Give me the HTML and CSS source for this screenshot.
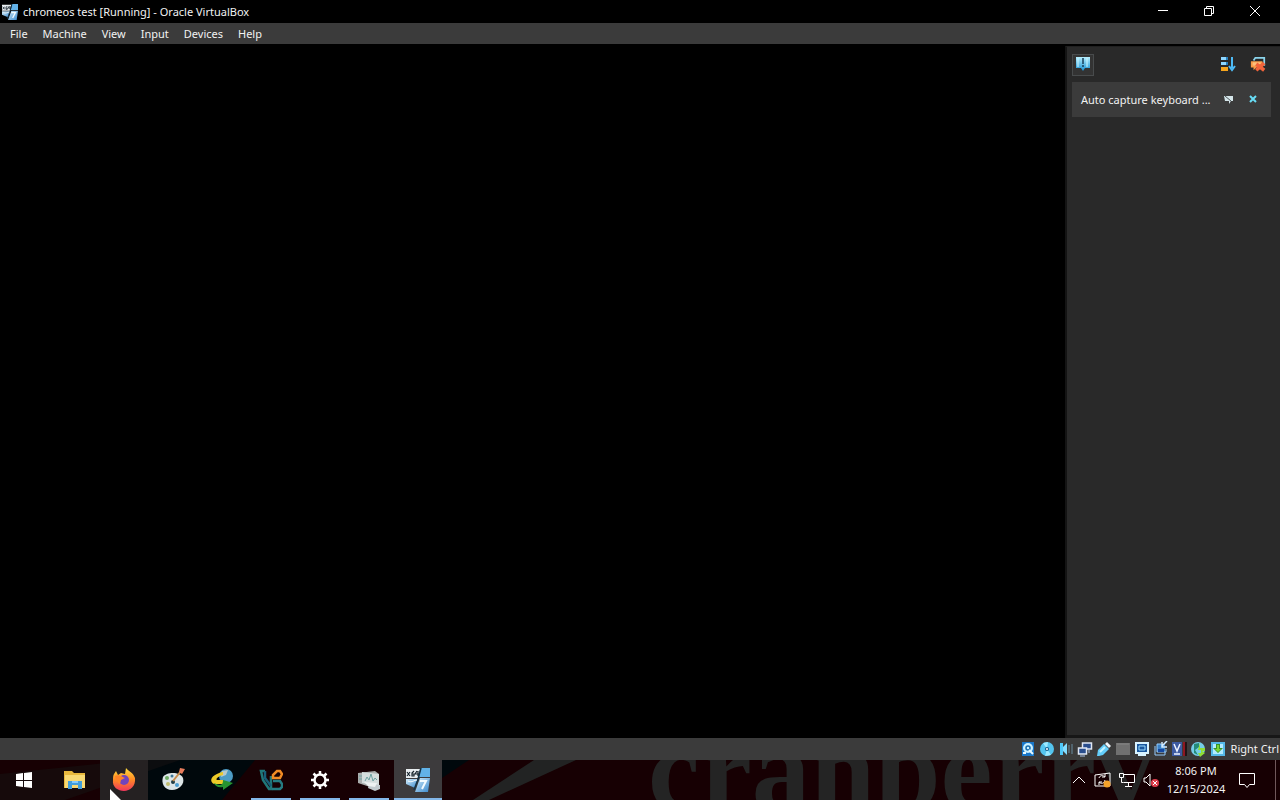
FILE: index.html
```html
<!DOCTYPE html>
<html lang="en">
<head>
<meta charset="utf-8">
<meta name="viewport" content="width=device-width, initial-scale=1">
<title>chromeos test [Running] - Oracle VirtualBox</title>
<link rel="stylesheet" href="styles.css">
</head>
<body>
<svg class="defs" aria-hidden="true">
  <defs>
    <linearGradient id="blue" x2="0" y2="1"><stop stop-color="#b5efff"/><stop offset="1" stop-color="#168fd2"/></linearGradient>
    <linearGradient id="fire" x2="0" y2="1"><stop stop-color="#ffde3b"/><stop offset=".5" stop-color="#ff8a25"/><stop offset="1" stop-color="#f0365c"/></linearGradient>
    <linearGradient id="glass" x2="1" y2="1"><stop stop-color="#d3edfb"/><stop offset="1" stop-color="#3787cc"/></linearGradient>
    <symbol id="vm" viewBox="0 0 24 24">
      <path d="M0 1h14l-2 9H0z" fill="#e8edf0"/><path d="M15 0h9v9H13z" fill="#62b2e8"/>
      <path d="M0 11h12l-3 9-9-4z" fill="url(#glass)"/><path d="M14 10h10l-2 14H9z" fill="url(#glass)"/>
      <path d="M15 0l-3 11-4 11" fill="none" stroke="#123247" stroke-width="1.5"/>
      <path d="M1 4l3 4M4 4L1 8M8 3L6 5v3h2V6H6M11 3L9 6h4M12 3v5" fill="none" stroke="#17242d" stroke-width="1.2"/>
      <path d="M14 13h6l-4 8" fill="none" stroke="#f2fbff" stroke-width="2"/>
      <path d="M2 13c4 2 6-1 9-1" stroke="#fff" fill="none"/>
    </symbol>
  </defs>
</svg>
<div class="desktop">
  <header class="titlebar">
    <svg class="app-icon" viewBox="0 0 24 24" aria-hidden="true"><use href="#vm"/></svg>
    <h1 class="title">chromeos test [Running] - Oracle VirtualBox</h1>
    <div class="window-controls">
      <button class="window-button" aria-label="Minimize"><svg width="12" height="12" viewBox="0 0 12 12"><path d="M1 5.5h10"/></svg></button>
      <button class="window-button" aria-label="Restore"><svg width="12" height="12" viewBox="0 0 12 12"><path d="M1.500 3.500h7v7h-7zM3.500 3V1.500h7v7H9"/></svg></button>
      <button class="window-button" aria-label="Close"><svg width="12" height="12" viewBox="0 0 12 12"><path d="M1 1l10 10M11 1L1 11"/></svg></button>
    </div>
  </header>
  <nav class="menubar" aria-label="Main menu">
    <button>File</button><button>Machine</button><button>View</button><button>Input</button><button>Devices</button><button>Help</button>
  </nav>
  <main class="workspace">
    <section class="guest" aria-label="Guest display"></section>
    <aside class="notifications" aria-label="Notifications">
      <div class="tools">
        <button class="tool tool-active" aria-label="Notifications"><svg width="16" height="16" viewBox="0 0 16 16"><path d="M1 1h14v11h-5l-2 3-2-3H1z" fill="url(#blue)"/><path d="M8 2v6M8 9v2" stroke="#173e5a" stroke-width="1.5"/><path d="M3 2v9M12 2v9" stroke="#caf5ff"/></svg></button>
        <button class="tool" aria-label="Sort notifications"><svg width="16" height="16" viewBox="0 0 16 16"><path d="M1 1h7v3H1zM1 6h7v3H1z" fill="#8ed6ff"/><path d="M1 11h7v4H1z" fill="#f7a51c"/><path d="M6 1h2v3H6zM6 6h2v3H6z" fill="#287ebb"/><path d="M12 1v11M9 10l3 4 3-4" fill="none" stroke="#4dbaf5" stroke-width="2"/></svg></button>
        <button class="tool" aria-label="Delete all notifications"><svg width="16" height="16" viewBox="0 0 18 18"><path d="M4 5l2-3h10v9" fill="none" stroke="#8bd4eb" stroke-width="2"/><path d="M1 6h13v7H7l-3 3v-3H1z" fill="#f99a46"/><path d="M3 8h9M3 10h7" stroke="#ffe0a7"/><path d="M7 9l9 7M16 8l-9 8" stroke="#f2633a" stroke-width="4"/></svg></button>
      </div>
      <article class="notice">
        <span class="notice-text">Auto capture keyboard ...</span>
        <button class="notice-action" aria-label="Do not show again"><svg width="10" height="10" viewBox="0 0 10 10"><path d="M0 1h9v5H7L5 9V6H1z" fill="#d4e5e9"/><path d="M1 1l6 5" stroke="#4c5558"/></svg></button>
        <button class="notice-action" aria-label="Dismiss"><svg width="10" height="10" viewBox="0 0 10 10"><path d="M2 1l6 6M8 1L2 7" stroke="#68dcf5" stroke-width="2"/></svg></button>
      </article>
    </aside>
  </main>
  <footer class="statusbar">
    <div class="devices">
      <svg viewBox="0 0 16 16"><path d="M2 1h12v14H2z" fill="#1977c8"/><circle cx="8" cy="7" r="5" fill="#c8f0ff"/><circle cx="8" cy="7" r="2" fill="none" stroke="#176cae" stroke-width="1.5"/><path d="M9 9l4 4M3 12h3" stroke="#e7faff" stroke-width="2"/></svg>
      <svg viewBox="0 0 16 16"><circle cx="8" cy="8" r="7" fill="#54c5ef"/><path d="M8 8L4 2l5-1zM8 8l4 6-6 1z" fill="#9deaff"/><circle cx="8" cy="8" r="2" fill="#155d8b"/><circle cx="8" cy="8" r="1" fill="#fff"/></svg>
      <svg viewBox="0 0 16 16"><path d="M2 2h3v12H2z" fill="#4fc8fa"/><path d="M5 6l4-4v12L5 10z" fill="#83dcff"/><path d="M11 4v8M14 3v10" stroke="#59717f" stroke-width="1.500"/></svg>
      <svg viewBox="0 0 16 16"><path d="M5.500 2h9v6h-9z" fill="#294d8d" stroke="#e0e8f5" stroke-width="1.500"/><path d="M1.500 7h8v6h-8z" fill="#294d8d" stroke="#e0e8f5" stroke-width="1.500"/><path d="M3 15h5M12 9v3" stroke="#a8bfe6"/></svg>
      <svg viewBox="0 0 16 16"><path d="M2 9l6-6 5 5-6 6-4 1H1z" fill="#63cdfa"/><path d="M9 3l2-2 4 4-2 2z" fill="#eef5fa"/><path d="M4 11l5-5" stroke="#c1f3ff" stroke-width="2"/></svg>
      <svg viewBox="0 0 16 16"><path d="M1 2h14v12H1z" fill="#707070"/><path d="M2 3h12" stroke="#858585"/></svg>
      <svg viewBox="0 0 16 16"><path d="M2 2h12v10H2z" fill="#19569d" stroke="#d8f3ff" stroke-width="2"/><path d="M5 5h6v4H5z" fill="none" stroke="#99dcff"/><path d="M4 14h8" stroke="#d8f3ff" stroke-width="2"/></svg>
      <svg viewBox="0 0 16 16"><path d="M4 3h8v8H4z" fill="#3b82c7"/><path d="M2 5v9h10v-3M4 3h4M4 3v8h9V8" fill="none" stroke="#95ccff"/><path d="M9 1v5h5M9 5l5-5" fill="none" stroke="#d4edff" stroke-width="1.5"/><path d="M5 8h6v3H5z" fill="#1547a0"/></svg>
      <svg viewBox="0 0 16 16"><path d="M0 1h10v14H0z" fill="#3d5aa1"/><path d="M2 3l3 7 3-7M2 13h6" fill="none" stroke="#edf3ff" stroke-width="1.500"/><path d="M11 1h3v14h-3z" fill="#8e1722"/><path d="M14 1v14" stroke="#231416" stroke-width="2"/></svg>
      <svg viewBox="0 0 16 16"><circle cx="7" cy="8" r="7" fill="#75cde7"/><path d="M3 3l5-1v4L4 9l3 5-4-2z" fill="#248a79"/><path d="M9 2v5h5v3h-3l3 2-5 4-2-4h3V9H7z" fill="#8fdd36"/></svg>
      <svg viewBox="0 0 16 16"><path d="M2 2h12v12H2z" fill="#b2ecff" stroke="#55b9e8" stroke-width="2"/><path d="M6 3h4v4h3l-5 5-5-5h3z" fill="#389526"/><path d="M7 4h2v4h2l-3 3-3-3h2z" fill="#7bd639"/></svg>
    </div>
    <span class="host-key">Right Ctrl</span>
  </footer>
  <div class="taskbar">
    <svg class="wallpaper" width="1280" height="40" viewBox="0 0 1280 40" aria-hidden="true">
      <path d="M148 0h107L222 40h-74zM442 0h27l-27 18z" fill="#00080c"/>
      <path d="M0 14l135-14h45L65 40H0z" fill="#161313" opacity=".55"/>
      <path d="M534 0h42l-87 40h-16z" fill="#222323"/>
      <text class="wallpaper-word" x="648" y="49">cranberry</text>
    </svg>
    <nav class="apps" aria-label="Taskbar">
      <button class="task" aria-label="Start"><svg width="16" height="16" viewBox="0 0 16 16"><path d="M0 2l7-1v7H0zM8 1l8-1v8H8zM0 9h7v6l-7-1zM8 9h8v7l-8-1z" fill="#fff"/></svg></button>
      <button class="task" aria-label="File Explorer"><svg width="24" height="24" viewBox="0 0 24 24"><path d="M1 3h8l2 2h11v15H1z" fill="#e8b83d"/><path d="M2 7h20v13H2z" fill="#f8d974"/><path d="M5 13h14v8h-4v-4H9v4H5z" fill="#429edb"/><path d="M9 14h6" stroke="#83caff" stroke-width="2"/></svg></button>
      <button class="task hovered" aria-label="Firefox"><svg width="24" height="24" viewBox="0 0 24 24"><path d="M2 6l2-3 2 4 3-2 4 1 1-6c2 3 7 4 9 10 1 8-5 13-11 13S0 19 1 12c0-3 0-4 1-6z" fill="url(#fire)"/><circle cx="12" cy="12" r="5" fill="#7144bd"/><path d="M3 8c4-2 7 1 10 2l-4 2-1 4-4-3z" fill="#ff8228"/></svg></button>
      <button class="task" aria-label="Paint"><svg width="24" height="24" viewBox="0 0 24 24"><path d="M2 9C5 4 19 3 22 10c2 6-4 12-11 12-8 0-11-7-9-13z" fill="#dce5e7"/><circle cx="6" cy="10" r="2" fill="#6eac64"/><circle cx="11" cy="8" r="1.500" fill="#3e7797"/><circle cx="12" cy="14" r="2" fill="#203d45"/><circle cx="7" cy="16" r="2" fill="#c1bd71"/><circle cx="16" cy="17" r="2" fill="#4b9fd3"/><path d="M12 13l8-10" stroke="#c68b4c" stroke-width="2"/><path d="M18 4l1-4 5 1-3 5z" fill="#e77c5c"/></svg></button>
      <button class="task" aria-label="Internet Download Manager"><svg width="24" height="24" viewBox="0 0 24 24"><circle cx="16" cy="8" r="7" fill="#4c9cc5"/><path d="M12 3l6-1-2 5-5 2z" fill="#b6c9cb"/><path d="M13 4C2 6-2 13 4 16h9v-4H7c-2-1 2-4 6-5z" fill="#edca28"/><path d="M4 15c8 4 9 1 9-3l10 3-10 7v-3c-5 1-8-1-9-4z" fill="#279431"/></svg></button>
      <button class="task open" aria-label="VirtualBox"><svg width="24" height="24" viewBox="0 0 24 24"><path d="M6 3H2l2 9 6 9h2V8" fill="none" stroke="#207779" stroke-width="2.500"/><path d="M6 3v7l6 8" fill="none" stroke="#175e78" stroke-width="2.500"/><path d="M14 10V7l4-4h3l2 3-2 4z" fill="none" stroke="#f18b24" stroke-width="2.500"/><path d="M14 13h7l2 3v3l-2 2h-8" fill="none" stroke="#257c82" stroke-width="2.500"/></svg></button>
      <button class="task open" aria-label="Settings"><svg width="24" height="24" viewBox="0 0 24 24"><circle cx="12" cy="12" r="5.500" fill="none" stroke="#fff" stroke-width="2.500"/><path d="M12 3v4M12 17v4M3 12h4M17 12h4M5.500 5.500l3 3M15.500 15.500l3 3M5.500 18.500l3-3M15.500 8.500l3-3" stroke="#fff" stroke-width="2.500"/></svg></button>
      <button class="task open" aria-label="System monitor"><svg width="24" height="24" viewBox="0 0 24 24"><path d="M1 5l17-2 4 3v12l-9 1-12-4z" fill="#a9adad"/><path d="M5 4l17 2v12L5 15z" fill="#d4dddd"/><path d="M2 8h3M2 11h3M8 13l2-4 2 3 2-6 2 7 2-3 2 2" stroke="#6da1a1" fill="none"/><path d="M12 16l11 1v4l-5 2-7-3z" fill="#c1cace"/><path d="M7 14l13 1-2 4-7-1z" fill="#edf2f2"/></svg></button>
      <button class="task open selected" aria-label="chromeos test virtual machine"><svg width="24" height="24" viewBox="0 0 24 24"><use href="#vm"/></svg></button>
    </nav>
    <div class="tray">
      <button class="tray-button" aria-label="Show hidden icons"><svg width="14" height="16" viewBox="0 0 14 16"><path d="M1 11l6-6 6 6" fill="none" stroke="#fff"/></svg></button>
      <button class="tray-button" aria-label="Update"><svg width="18" height="16" viewBox="0 0 18 16"><path d="M1 3l15-2v13H1z" fill="none" stroke="#fff"/><path d="M5 6c1-3 4-3 6-1M11 2v3H8M11 8c-1 4-4 4-6 2M5 13v-3h3" fill="none" stroke="#fff"/><circle cx="13" cy="12" r="3.500" fill="#f3a22b"/></svg></button>
      <button class="tray-button" aria-label="Network"><svg width="18" height="16" viewBox="0 0 18 16"><path d="M5.500 2.500h11v8h-11M7 14.500h7M10.500 11v3M1.500 1.500h4v4h-4zM3.500 6v4.500h2" fill="none" stroke="#fff"/></svg></button>
      <button class="tray-button" aria-label="Volume muted"><svg width="18" height="16" viewBox="0 0 18 16"><path d="M2 6h2l4-4v12l-4-4H2z" fill="none" stroke="#fff"/><circle cx="13" cy="11" r="4" fill="#df3c4b"/><path d="M11 9l4 4M15 9l-4 4" stroke="#fff"/></svg></button>
      <button class="clock"><time datetime="2024-12-15T20:06">8:06 PM<br>12/15/2024</time></button>
      <button class="action-center" aria-label="Action center"><svg width="18" height="18" viewBox="0 0 18 18"><path d="M1.500 2.500h15v11h-5l-2.500 3-2.500-3h-5z" fill="none" stroke="#fff"/></svg></button>
      <button class="show-desktop" aria-label="Show desktop"></button>
    </div>
    <svg class="cursor" width="12" height="19" viewBox="0 0 12 19" aria-hidden="true"><path d="M0 0v17l4-4 3 6 2-1-3-6h6z" fill="#fff"/></svg>
  </div>
</div>
</body>
</html>
```
FILE: styles.css
```css
* { box-sizing: border-box; }
body { margin: 0; background: #000; color: #f2f2f2; font-family: "Noto Sans", sans-serif; font-size: 11px; line-height: 16px; }
button { margin: 0; padding: 0; border: 0; background: none; color: inherit; font: inherit; }
svg { display: block; flex-shrink: 0; }
.defs { position: absolute; width: 0; height: 0; }
.desktop { display: flex; flex-direction: column; height: 100vh; overflow: hidden; }
.titlebar { display: flex; align-items: center; height: 23px; padding-left: 2px; background: #000; flex-shrink: 0; }
.app-icon { width: 16px; height: 16px; }
.title { margin: 0 0 0 5px; font-size: 11px; font-weight: 400; white-space: nowrap; }
.window-controls { display: flex; margin-left: auto; margin-right: 2px; }
.window-button { display: grid; place-items: center; width: 46px; height: 24px; padding-bottom: 2px; }
.window-button svg { fill: none; stroke: #fff; stroke-width: 1; }
.menubar { display: flex; height: 21px; padding-left: 3px; background: #3b3b3b; flex-shrink: 0; }
.menubar button { padding: 0 8px 0 7px; }
.workspace { display: flex; flex: 1; min-height: 0; border-top: 2px solid #000; }
.guest { flex: 1; background: #000; }
.notifications { width: 215px; padding: 7px 9px 0 5px; border-left: 2px solid #141414; border-top: 1px solid #202020; border-bottom: 3px solid #171717; background: #292929; }
.tools { display: flex; gap: 10px; height: 22px; padding-right: 3px; }
.tool { display: grid; place-items: center; width: 20px; height: 20px; }
.tool-active { width: 22px; height: 22px; margin-right: auto; border: 1px solid #484b4c; background: #333; padding-bottom: 3px; }
.notice { display: flex; align-items: center; gap: 4px; height: 35px; margin-top: 6px; padding: 0 8px 0 9px; background: #3b3b3b; }
.notice-text { flex: 1; white-space: nowrap; }
.notice-action { display: grid; place-items: center; width: 20px; height: 20px; }
.statusbar { display: flex; align-items: center; justify-content: flex-end; gap: 4px; height: 22px; padding-right: 1px; background: #3b3b3b; flex-shrink: 0; }
.devices { display: flex; gap: 3px; margin-right: 1px; }
.devices svg { width: 16px; height: 16px; }
.host-key { white-space: nowrap; }
.taskbar { position: relative; display: flex; justify-content: space-between; height: 40px; overflow: hidden; background: #170003; flex-shrink: 0; }
.wallpaper { position: absolute; top: 0; left: 0; }
.wallpaper-word { font-family: "Liberation Serif", serif; font-size: 117px; font-weight: 700; fill: #242424; }
.apps, .tray { position: relative; display: flex; }
.apps { gap: 1px; }
.task { display: grid; place-items: center; width: 48px; height: 40px; }
.task:first-child { margin-right: 2px; }
.hovered { background: #252122; }
.open { background: linear-gradient(#83b7e9, #83b7e9) center bottom / 40px 2px no-repeat; }
.selected { background: linear-gradient(#83b7e9, #83b7e9) center bottom / 48px 2px no-repeat, #3d3b3d; }
.tray-button { display: grid; place-items: center; width: 24px; }
.clock { width: 66px; text-align: center; line-height: 18px; }
.action-center { display: grid; place-items: center; width: 36px; margin-right: 10px; }
.show-desktop { width: 5px; border-left: 1px solid #70585b; }
.cursor { position: absolute; top: 29px; left: 110px; }
```
